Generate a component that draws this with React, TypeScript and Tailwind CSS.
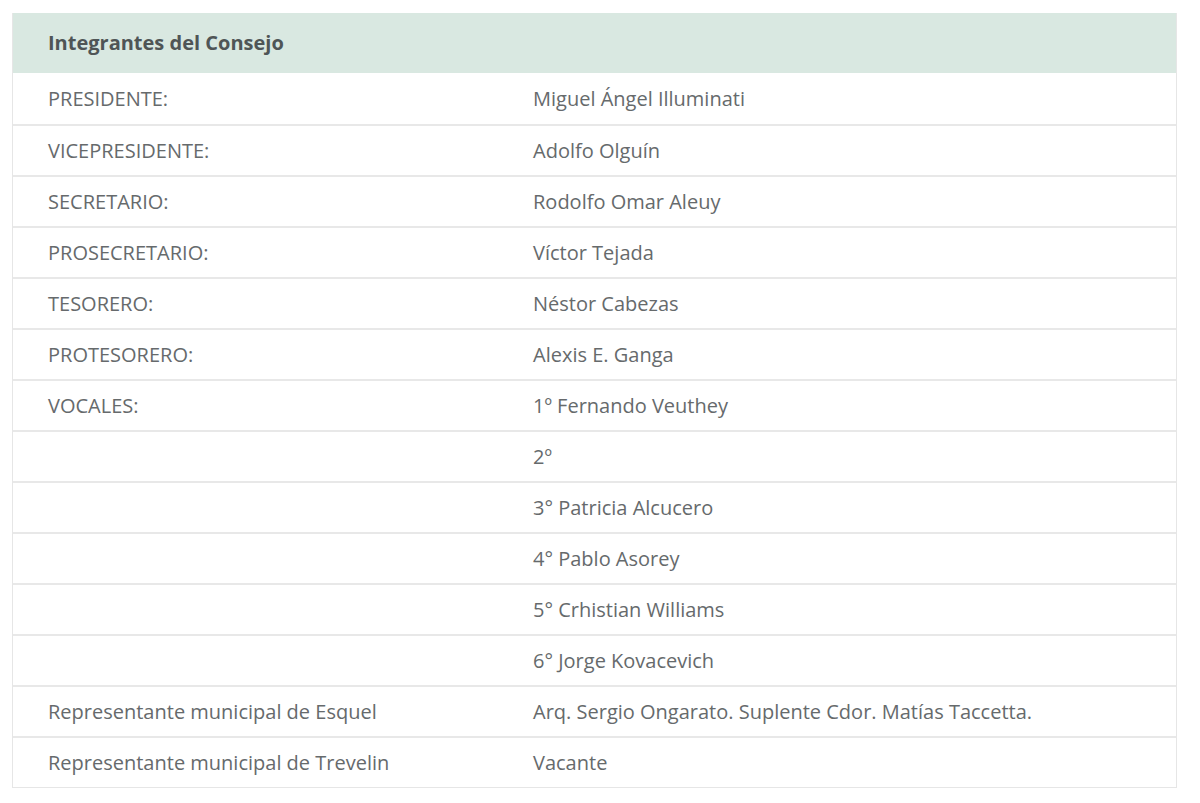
import React from "react";

const rows: [string, string][] = [
  ["PRESIDENTE:", "Miguel Ángel Illuminati"],
  ["VICEPRESIDENTE:", "Adolfo Olguín"],
  ["SECRETARIO:", "Rodolfo Omar Aleuy"],
  ["PROSECRETARIO:", "Víctor Tejada"],
  ["TESORERO:", "Néstor Cabezas"],
  ["PROTESORERO:", "Alexis E. Ganga"],
  ["VOCALES:", "1º Fernando Veuthey"],
  ["", "2º"],
  ["", "3° Patricia Alcucero"],
  ["", "4° Pablo Asorey"],
  ["", "5° Crhistian Williams"],
  ["", "6° Jorge Kovacevich"],
  ["Representante municipal de Esquel", "Arq. Sergio Ongarato. Suplente Cdor. Matías Taccetta."],
  ["Representante municipal de Trevelin", "Vacante"],
];

export default function App() {
  return (
    <div className="min-h-[803px] w-[1200px] bg-white pt-[13px] pl-[12px]" style={{ fontFamily: '"Open Sans", sans-serif' }}>
      <div className="w-[1165px] border border-[#e6e6e6] border-t-0">
        <div className="h-[60px] bg-[#d9e8e1] flex items-center pl-[35px] text-[20px] font-bold text-[#4f5556]">
          Integrantes del Consejo
        </div>
        {rows.map(([a, b], i) => (
          <div
            key={i}
            className={`grid grid-cols-[485px_1fr] h-[51px] items-center text-[20px] text-[#666a6c] ${i === 0 ? "" : "border-t-2 border-[#e8e8e8]"}`}
          >
            <div className="pl-[35px]">{a}</div>
            <div className="pl-[35px]">{b}</div>
          </div>
        ))}
      </div>
    </div>
  );
}
